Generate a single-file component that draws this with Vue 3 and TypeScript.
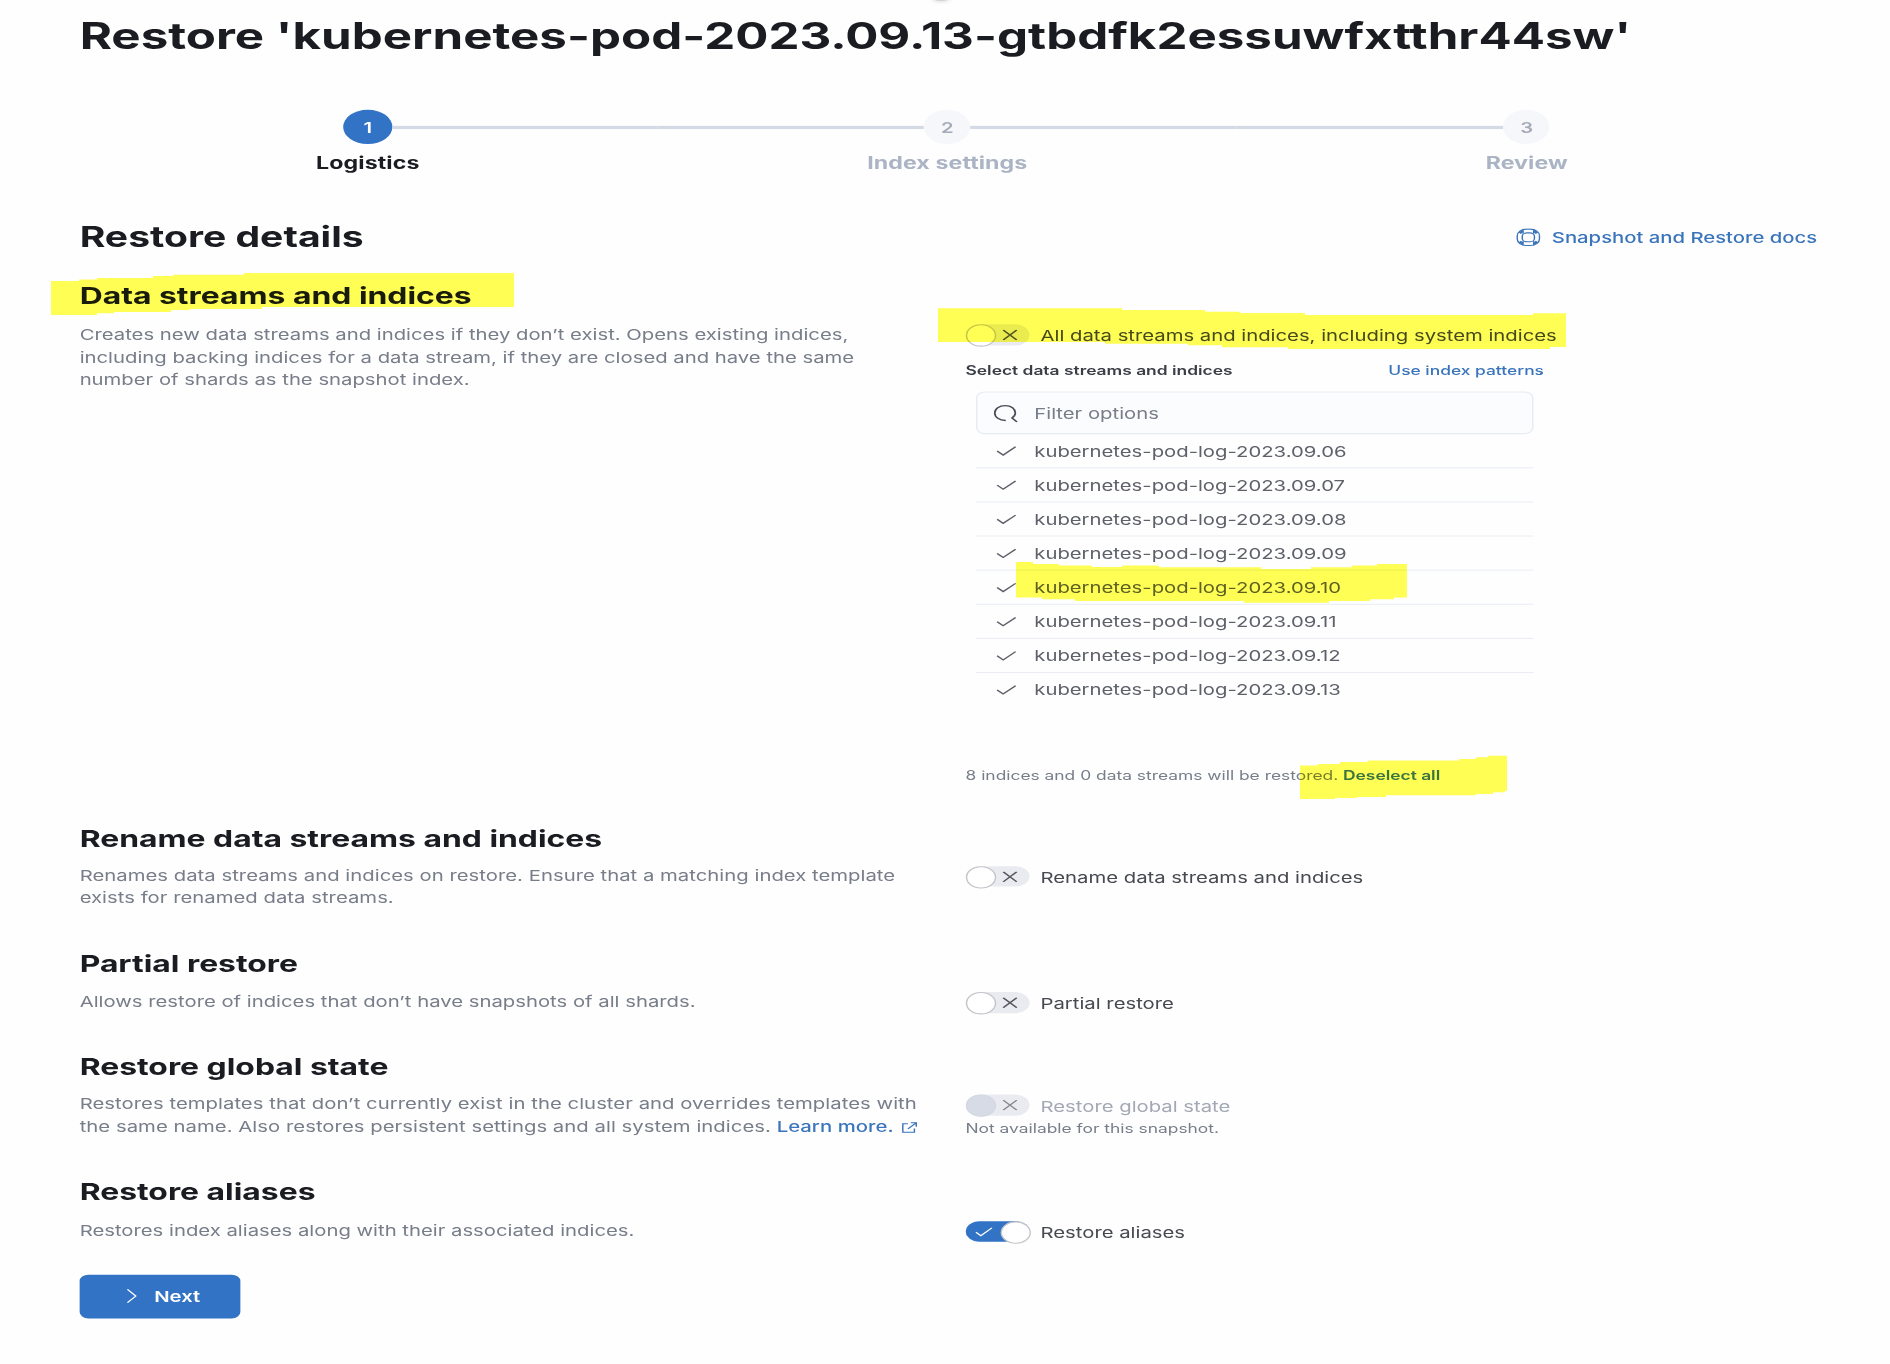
<script setup lang="ts">
type SwitchState = 'off' | 'on' | 'disabled'

interface Section {
  id: string
  title: string
  lines: string[]
  link?: string
  label: string
  state: SwitchState
  help?: string
}

const steps = ['Logistics', 'Index settings', 'Review']

const sections: Section[] = [
  {
    id: 'indices',
    title: 'Data streams and indices',
    lines: [
      'Creates new data streams and indices if they don’t exist. Opens existing indices,',
      'including backing indices for a data stream, if they are closed and have the same',
      'number of shards as the snapshot index.',
    ],
    label: 'All data streams and indices, including system indices',
    state: 'off',
  },
  {
    id: 'rename',
    title: 'Rename data streams and indices',
    lines: [
      'Renames data streams and indices on restore. Ensure that a matching index template',
      'exists for renamed data streams.',
    ],
    label: 'Rename data streams and indices',
    state: 'off',
  },
  {
    id: 'partial',
    title: 'Partial restore',
    lines: ['Allows restore of indices that don’t have snapshots of all shards.'],
    label: 'Partial restore',
    state: 'off',
  },
  {
    id: 'global',
    title: 'Restore global state',
    lines: [
      'Restores templates that don’t currently exist in the cluster and overrides templates with',
      'the same name. Also restores persistent settings and all system indices.',
    ],
    link: 'Learn more.',
    label: 'Restore global state',
    state: 'disabled',
    help: 'Not available for this snapshot.',
  },
  {
    id: 'aliases',
    title: 'Restore aliases',
    lines: ['Restores index aliases along with their associated indices.'],
    label: 'Restore aliases',
    state: 'on',
  },
]

const indices = ['06', '07', '08', '09', '10', '11', '12', '13'].map((d) => `kubernetes-pod-log-2023.09.${d}`)

// Marker strokes laid over the page, in page pixels.
const marks = [
  'M51 281H79V279.5H97V278H153V276H173V274.7H244V273H514V307H262V309H190V310H171V312H114V313.3H97V315H51Z',
  'M938 308.3H1122V310H1205V311.7H1240V313H1305V315H1533V313.3H1566V347H1550V349H1288V347.3H1222V345.3H1188V343.7H1105V342H938Z',
  'M1016 562H1033V564H1059V565.5H1092V567H1122V565.5H1159V567.3H1261V569H1311V567.3H1352V565.5H1377V564H1407V597.5H1394V599.3H1370V601H1329V602.7H1244V601H1075V599.3H1042V597.5H1016Z',
  'M1300 765.5H1318V764H1340V762H1368V760.5H1459V759H1476V757.3H1488V755.7H1507V790.7H1505V792.3H1493V794H1476V795.3H1386V797H1357V798H1335V799H1300Z',
]
</script>

<template>
  <div class="page">
    <main class="sheet">
      <h1>Restore 'kubernetes-pod-2023.09.13-gtbdfk2essuwfxtthr44sw'</h1>

      <ol class="steps">
        <li v-for="(step, i) in steps" :key="step" :class="{ active: i === 0 }">
          <div class="rail">
            <i :class="{ line: i > 0 }"></i>
            <span class="num">{{ i + 1 }}</span>
            <i :class="{ line: i < steps.length - 1 }"></i>
          </div>
          <span class="name">{{ step }}</span>
        </li>
      </ol>

      <header class="head">
        <h2>Restore details</h2>
        <a class="docs">
          <svg width="17" height="17" viewBox="0 0 17 17" fill="none" stroke="currentColor">
            <rect x=".8" y=".8" width="15.4" height="15.4" rx="6.4" />
            <rect x="4.3" y="4.3" width="8.4" height="8.4" rx="3.2" />
            <path d="M4.8 1.2v3.6M12.2 1.2v3.6M4.8 12.2v3.6M12.2 12.2v3.6" />
            <path d="M2.6 4.6 4.6 2.6M12.4 2.6l2 2M2.6 12.4l2 2M12.4 14.4l2-2" stroke-width="2" />
          </svg>
          Snapshot and Restore docs
        </a>
      </header>

      <section v-for="s in sections" :key="s.id" :class="s.id">
        <div class="about">
          <h3>{{ s.title }}</h3>
          <p>
            <template v-for="(line, i) in s.lines" :key="i"><br v-if="i" />{{ line }}</template>
            <template v-if="s.link">
              {{ ' ' }}<a class="more">{{ s.link }}<svg width="12" height="12" viewBox="0 0 12 12" fill="none" stroke="currentColor" stroke-width="1">
                <path d="M5 2.5H1.5v8h8V7M7 1.5h3.8v3.8M10.5 1.8 5 7.3" />
              </svg></a>
            </template>
          </p>
        </div>
        <div class="field">
          <div class="toggle" :class="s.state">
            <span class="track">
              <svg v-if="s.state === 'on'" class="tick" width="13" height="10" viewBox="0 0 13 10" fill="none" stroke="currentColor">
                <path d="M1 5.2 4.4 8.4 12 1.2" />
              </svg>
              <svg v-else class="cross" width="11" height="10" viewBox="0 0 11 10" fill="none" stroke="currentColor" stroke-width="1.2">
                <path d="M.8.3 10.2 9.7M10.2.3.8 9.7" />
              </svg>
              <span class="thumb"></span>
            </span>
            <span class="label">{{ s.label }}</span>
          </div>
          <div v-if="s.help" class="help">{{ s.help }}</div>

          <template v-if="s.id === 'indices'">
            <div class="pick">
              <b>Select data streams and indices</b>
              <a>Use index patterns</a>
            </div>
            <div class="search">
              <svg width="17" height="17" viewBox="0 0 17 17" fill="none" stroke="currentColor" stroke-width="1.2">
                <path d="M8.6 15.2C4 15.2 1 12 1 8.2 1 4.200 4 1.200 8.200 1.200S15.200 4.200 15.200 8.200C15.200 10.200 14.300 11.600 12.900 12.900L16.400 16.600" />
              </svg>
              Filter options
            </div>
            <ul>
              <li v-for="name in indices" :key="name">
                <svg width="14" height="10" viewBox="0 0 14 10" fill="none" stroke="currentColor" stroke-width="1.2">
                  <path d="M.6 4.800 4.800 8.600 13.400.900" />
                </svg>
                {{ name }}
              </li>
            </ul>
            <div class="sum">8 indices and 0 data streams will be restored. <a>Deselect all</a></div>
          </template>
        </div>
      </section>

      <button type="button">
        <svg width="8" height="14" viewBox="0 0 8 14" fill="none" stroke="currentColor"><path d="M1 .8 6.8 7 1 13.2" /></svg>
        <span>Next</span>
      </button>
    </main>

    <svg class="marks" width="1890" height="1364" viewBox="0 0 1890 1364">
      <path v-for="d in marks" :key="d" :d="d" fill="#ffff54" />
    </svg>
    <span class="edge"></span>
  </div>
</template>

<style>
body {
  margin: 0;
  background: #fefefe;
}
</style>

<style scoped>
.page {
  position: relative;
  width: 1890px;
  height: 1364px;
  overflow: hidden;
  background: #fefefe;
  isolation: isolate;
}
/* The sheet is shown wider than it is tall: 1.448 across, 1.0667 down. */
.sheet {
  box-sizing: border-box;
  width: 1305px;
  height: 1278px;
  padding: 14.2px 48px 0 55px;
  transform: scale(1.448, 1.0667);
  transform-origin: 0 0;
  font: 400 14px/21px Inter, "Liberation Sans", sans-serif;
  color: #46494f;
}
.marks {
  position: absolute;
  left: 0;
  top: 0;
  mix-blend-mode: multiply;
  pointer-events: none;
}
/* Soft shadow of the flyout's handle at the top edge. */
.edge {
  position: absolute;
  left: 932px;
  top: -5px;
  width: 18px;
  height: 6px;
  border-radius: 50%;
  background: #d4d4d4;
  box-shadow: 0 0 4px #d0d0d0;
}
h1, h2, h3, p, ul, ol {
  margin: 0;
  padding: 0;
  list-style: none;
}
h1, h2, h3 {
  color: #1a1c21;
  font-weight: 700;
  white-space: nowrap;
}
h1 {
  font-size: 34px;
  line-height: 40px;
}
a {
  color: #3a74bb;
}
svg {
  display: block;
  flex: none;
}
.steps {
  display: grid;
  grid-template-columns: repeat(3, 400.2px);
  margin: 48.9px 0 0 -1.1px;
}
.steps li {
  text-align: center;
}
.rail {
  display: flex;
  align-items: center;
  height: 32px;
}
.rail i {
  flex: 1;
  height: 2.4px;
  margin-top: 1px;
}
.rail .line {
  background: #d3dae6;
}
.num {
  box-sizing: border-box;
  width: 32px;
  height: 32px;
  padding-top: 0.6px;
  border-radius: 50%;
  background: #f5f7fa;
  color: #a5abb8;
  font-size: 14px;
  font-weight: 600;
  line-height: 32px;
}
.active .num {
  width: 33.5px;
  background: #3273c6;
  color: #fff;
}
.name {
  display: block;
  margin-top: 5.4px;
  font-size: 16px;
  font-weight: 700;
  line-height: 24px;
  letter-spacing: 0.06px;
  color: #abb4c4;
}
.active .name {
  color: #1a1c21;
}
.head {
  display: flex;
  justify-content: space-between;
  box-sizing: border-box;
  width: 1200px;
  height: 56.5px;
  margin-top: 41.7px;
}
h2 {
  margin-top: 1.2px;
  font-size: 27px;
  line-height: 32px;
}
.docs {
  display: flex;
  align-items: center;
  gap: 7.6px;
  height: 32px;
  font-weight: 500;
}
section {
  display: grid;
  grid-template-columns: 611.8px 400px;
}
.indices {
  height: 509.1px;
  --gap: 12px;
}
.rename {
  height: 117.2px;
  --gap: 10.5px;
}
.rename p {
  letter-spacing: 0.015px;
}
.partial {
  height: 97.5px;
  --gap: 11.4px;
}
.global {
  height: 116.5px;
  --gap: 10px;
}
.global p {
  letter-spacing: 0.03px;
}
.aliases {
  height: 92.3px;
  --gap: 12px;
}
h3 {
  font-size: 22px;
  line-height: 28px;
}
p {
  margin-top: var(--gap);
  color: #777d89;
  white-space: nowrap;
}
.more {
  font-weight: 500;
}
.more svg {
  display: inline-block;
  margin-left: 5px;
  vertical-align: -1.5px;
}
.field {
  padding-top: calc(var(--gap) + 29.6px);
}
.toggle {
  display: flex;
  gap: 7.8px;
  height: 20px;
  white-space: nowrap;
}
.track {
  position: relative;
  flex: none;
  width: 44px;
  height: 19.6px;
  border-radius: 10px;
  background: #e9ebf0;
  color: #54575f;
}
.thumb {
  position: absolute;
  left: 0;
  top: 0;
  box-sizing: border-box;
  width: 21px;
  height: 21px;
  border: 1px solid #c3c5c9;
  border-radius: 50%;
  background: #fff;
}
.cross {
  position: absolute;
  left: 24.8px;
  top: 4.8px;
}
.on .track {
  background: #3273c6;
  color: #fff;
}
.on .thumb {
  left: 24.2px;
}
.tick {
  position: absolute;
  left: 6px;
  top: 5px;
}
.disabled .track {
  color: #85888f;
}
.disabled .thumb {
  background: #d6dbe5;
  border-color: #d3d8e3;
}
.disabled .label {
  color: #a2a8b5;
}
.help {
  margin-top: 3px;
  color: #777d89;
  font-size: 12px;
  line-height: 18px;
}
.pick {
  display: flex;
  justify-content: space-between;
  width: 399.5px;
  margin-top: 16.2px;
  font-size: 12px;
  line-height: 16px;
}
.pick b {
  color: #3a3d45;
  font-weight: 600;
}
.pick a {
  font-weight: 500;
}
.search {
  display: flex;
  align-items: center;
  gap: 11.1px;
  box-sizing: border-box;
  height: 40px;
  margin: 11px 8px 0 7.6px;
  padding-left: 10.8px;
  border: 1px solid #e7ebf2;
  border-radius: 6px;
  background: #fbfcfd;
  color: #777d89;
}
.search svg {
  color: #4a4d55;
}
ul {
  margin: 0 8px 0 7.6px;
}
ul li {
  display: flex;
  gap: 12.6px;
  box-sizing: border-box;
  height: 32px;
  padding: 5px 0 0 13.3px;
  border-bottom: 1px solid #eaeef4;
  color: #5e6169;
}
ul li:last-child {
  border-color: transparent;
}
ul svg {
  margin-top: 5.4px;
}
.sum {
  margin-top: 54.7px;
  color: #777d89;
  font-size: 12px;
  line-height: 18px;
}
.sum a {
  font-weight: 600;
}
button {
  display: flex;
  align-items: center;
  gap: 11.5px;
  width: 110.6px;
  height: 40.5px;
  padding: 0 0 0 32px;
  border: 0;
  border-radius: 6px;
  background: #3273c6;
  color: #fff;
  font: 600 14px/21px Inter, "Liberation Sans", sans-serif;
}
button span {
  padding-top: 1px;
}
</style>
